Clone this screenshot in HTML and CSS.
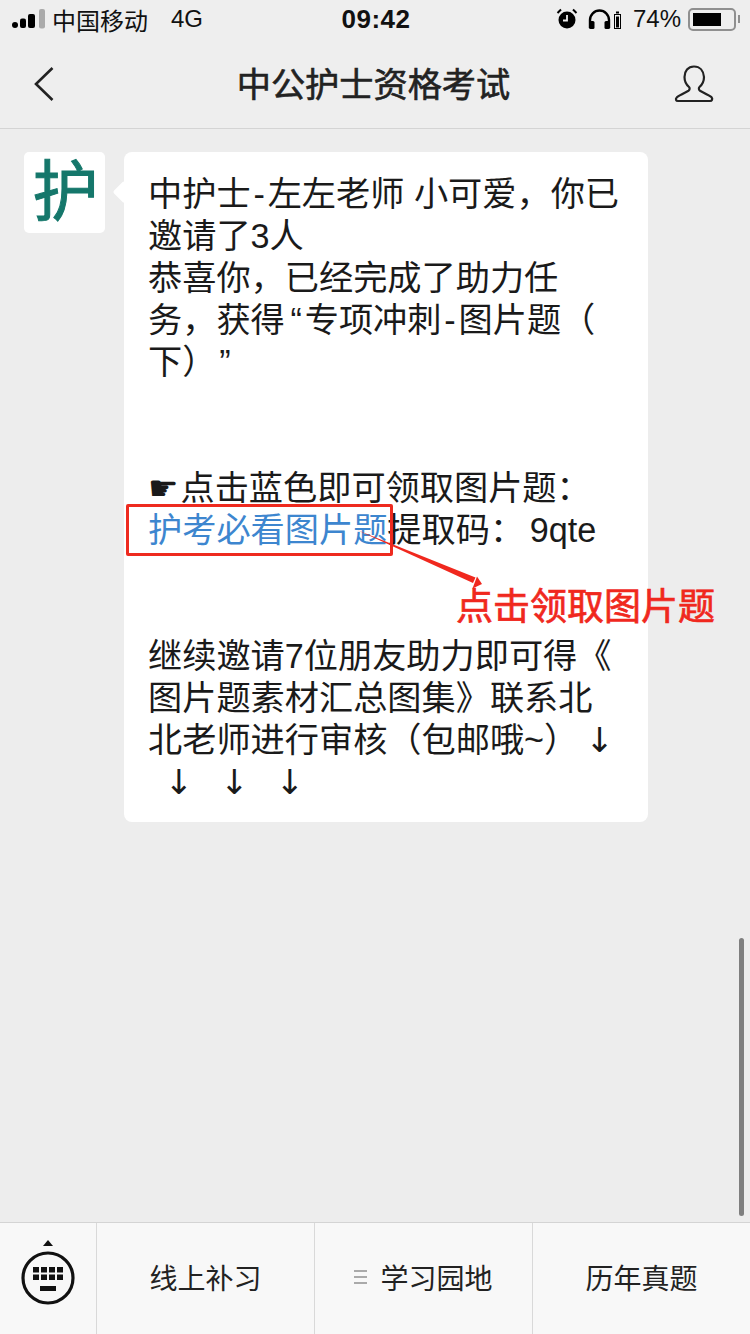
FILE: index.html
```html
<!DOCTYPE html>
<html lang="zh-CN">
<head>
    <meta charset="UTF-8">
    <meta name="viewport" content="width=device-width, initial-scale=1.0">
    <title>中公护士资格考试</title>
    <link rel="stylesheet" href="styles.css">
</head>
<body>
    <div class="screen">
        <header class="top">
            <div class="status-bar">
                <div class="status-left">
                    <svg class="signal" width="34" height="20" viewBox="0 0 34 20">
                        <circle cx="3" cy="16" r="3" fill="#000"/>
                        <rect x="8" y="9.500" width="6" height="9.500" rx="2" fill="#000"/>
                        <rect x="16" y="5" width="7" height="14" rx="2" fill="#000"/>
                        <rect x="27" y="0" width="6" height="19.500" rx="2" fill="#aaa"/>
                    </svg>
                    <span class="carrier">中国移动</span>
                    <span class="network">4G</span>
                </div>
                <div class="clock">09:42</div>
                <div class="status-right">
                    <svg width="22" height="22" viewBox="0 0 22 22">
                        <circle cx="11" cy="12" r="8.500" fill="#000"/>
                        <path d="M11 7v5.500H7" fill="none" stroke="#eee" stroke-width="1.800"/>
                        <path d="M1.500 5 5 1.500M20.500 5 17 1.500" stroke="#000" stroke-width="2"/>
                    </svg>
                    <svg class="phones" width="34" height="22" viewBox="0 0 34 22">
                        <path d="M2 20v-8a9.500 9.500 0 0 1 19 0v8" fill="none" stroke="#000" stroke-width="2.400"/>
                        <rect x="1" y="13" width="5.500" height="8" rx="1.500" fill="#000"/>
                        <rect x="16.500" y="13" width="5.500" height="8" rx="1.500" fill="#000"/>
                        <rect x="26.500" y="6.500" width="6" height="14" fill="none" stroke="#000" stroke-width="1"/>
                        <rect x="28" y="8.500" width="3" height="11" fill="#000"/>
                        <rect x="28" y="3.500" width="3" height="2" fill="#000"/>
                    </svg>
                    <span class="battery-text">74%</span>
                    <div class="battery"><div class="battery-fill"></div></div>
                    <div class="battery-tip"></div>
                </div>
            </div>
            <nav class="nav-bar">
                <svg width="22" height="36" viewBox="0 0 22 36">
                    <path d="M19.500 2 3 18l16.500 16" fill="none" stroke="#222" stroke-width="2.600"/>
                </svg>
                <h1 class="nav-title">中公护士资格考试</h1>
                <svg class="nav-user" width="40" height="38" viewBox="0 0 40 38">
                    <path d="M20 1.500c-6 0-9.500 4.500-9.500 10.500 0 4.500 2.200 8 4.500 10 1 1 .8 3-.5 3.800-3 1.700-9 4.400-11.500 6.400C1 34 2 36 4 36h32c2 0 3-2 1.500-3.800-2.500-2-8.500-4.700-11.500-6.400-1.300-.8-1.500-2.800-.5-3.800 2.300-2 4.500-5.500 4.500-10C29.500 6 26 1.500 20 1.500z" fill="none" stroke="#222" stroke-width="2.200"/>
                </svg>
            </nav>
        </header>

        <main class="chat">
            <div class="avatar">护</div>
            <div class="bubble">
                <p class="message">中护士&#8202;-&#8202;左左老师 小可爱，你已邀请了3人<br>恭喜你，已经完成了助力任务，获得&#8202;&#8202;“&#8202;专项冲刺&#8202;-&#8202;图片题（<br>下）&#8202;”<br><br><br><span class="hand">☛</span>点击蓝色即可领取图片题：<br><a class="link">护考必看图片题</a>提取码：&#8202;&#8202;9qte<br><br><br>继续邀请7位朋友助力即可得《<br>图片题素材汇总图集》联系北北老师进行审核（包邮哦~）<span class="arrows first">↓</span><br><span class="arrows last">&nbsp;↓&nbsp;&nbsp;↓&nbsp;&nbsp;↓</span></p>
            </div>
        </main>

        <footer class="menu">
            <div class="menu-keyboard">
                <svg width="56" height="68" viewBox="0 0 56 68">
                    <path d="M23 8 28 2l5 6z" fill="#111"/>
                    <circle cx="28" cy="40" r="25" fill="none" stroke="#111" stroke-width="3.200"/>
                    <path d="M13 29h6v5.500h-6zM21 29h6v5.500h-6zM29 29h6v5.500h-6zM37 29h6v5.500h-6zM13 36.500h6V42h-6zM21 36.500h6V42h-6zM29 36.500h6V42h-6zM37 36.500h6V42h-6zM20 48h16v5H20z" fill="#111"/>
                </svg>
            </div>
            <div class="menu-item">线上补习</div>
            <div class="menu-item"><span class="menu-lines"></span>学习园地</div>
            <div class="menu-item">历年真题</div>
        </footer>

        <!-- red annotation drawn on top of the screenshot -->
        <div class="mark-box"></div>
        <svg class="mark-arrow" width="130" height="62" viewBox="0 0 130 62">
            <path d="M0 0 118.500 47.500 116 53z" fill="#f0281e"/>
            <path d="M125 54 120 46.500 115.500 58.500z" fill="#f0281e"/>
        </svg>
        <div class="mark-text">点击领取图片题</div>
        <div class="scrollbar"></div>
    </div>
</body>
</html>
```

FILE: styles.css
```css
* {
    box-sizing: border-box;
}

body {
    margin: 0;
    font-family: "Liberation Sans", "Noto Sans CJK SC", sans-serif;
    color: #1c1c1c;
    background: #ededed;
    text-spacing-trim: space-all;
}

.screen {
    position: relative;
    width: 750px;
    height: 1334px;
    overflow: hidden;
    display: flex;
    flex-direction: column;
}

.top {
    height: 129px;
    background: #eeeeee;
    border-bottom: 1px solid #d4d4d4;
}

.status-bar {
    height: 40px;
    display: grid;
    grid-template-columns: 1fr auto 1fr;
    align-items: center;
    padding: 0 10px 2px 12px;
    font-size: 24px;
    color: #111;
}

.status-left {
    display: flex;
    align-items: center;
}

.carrier {
    margin-left: 6px;
}

.network {
    margin-left: 23px;
}

.clock {
    font-size: 26px;
    font-weight: bold;
    letter-spacing: 0.5px;
}

.status-right {
    display: flex;
    align-items: center;
    justify-content: flex-end;
}

.phones {
    margin-left: 10px;
}

.battery-text {
    margin-left: 11px;
}

.battery {
    width: 48px;
    height: 23px;
    margin-left: 7px;
    padding: 3px;
    border: 2px solid #8f8f8f;
    border-radius: 5px;
}

.battery-fill {
    width: 74%;
    height: 100%;
    background: #000;
}

.battery-tip {
    width: 2px;
    height: 8px;
    margin-left: 2px;
    background: #8f8f8f;
}

.nav-bar {
    height: 88px;
    display: grid;
    grid-template-columns: 1fr auto 1fr;
    align-items: center;
    padding: 0 36px 1px 33px;
}

.nav-title {
    margin: 0 0 3px;
    font-size: 34.200px;
    font-weight: 400;
    -webkit-text-stroke: 0.6px #222;
    color: #222;
}

.nav-user {
    justify-self: end;
}

.chat {
    flex: 1;
    display: flex;
    align-items: flex-start;
    gap: 19px;
    padding: 23px 0 0 24px;
}

.avatar {
    width: 81px;
    height: 81px;
    padding-left: 2px;
    background: #fff;
    border-radius: 5px;
    color: #15776b;
    font-size: 66px;
    -webkit-text-stroke: 1px #15776b;
    line-height: 81px;
    text-align: center;
}

.bubble {
    position: relative;
    width: 524px;
    padding: 21px 24px 19px;
    background: #fff;
    border-radius: 8px;
}

.bubble::before {
    content: "";
    position: absolute;
    left: -8px;
    top: 32px;
    width: 16px;
    height: 16px;
    background: #fff;
    transform: rotate(45deg);
    border-radius: 2px;
}

.message {
    position: relative;
    margin: 0;
    font-size: 34.200px;
    line-height: 42px;
    color: #1a1a1a;
}

.hand {
    margin-right: 2px;
    font-family: "DejaVu Sans", sans-serif;
    font-size: 34px;
    line-height: 1;
}

.link {
    color: #3d86cf;
}

.arrows {
    font-family: "DejaVu Sans", sans-serif;
    line-height: 1;
}

.arrows.first {
    margin-left: 7px;
}

.arrows.last {
    padding-left: 4px;
    letter-spacing: 1.700px;
}

.menu {
    height: 112px;
    display: flex;
    background: #f8f8f8;
    border-top: 1px solid #d4d4d4;
}

.menu-keyboard {
    width: 97px;
    display: flex;
    align-items: center;
    justify-content: center;
    padding: 0 1px 13px 0;
    border-right: 1px solid #d9d9d9;
}

.menu-item {
    flex: 1;
    display: flex;
    align-items: center;
    justify-content: center;
    padding-bottom: 4px;
    font-size: 28px;
    color: #222;
    border-right: 1px solid #d9d9d9;
}

.menu-item:last-child {
    border-right: none;
}

.menu-lines {
    width: 13px;
    height: 14px;
    margin-right: 13px;
    border-top: 2px solid #aaa;
    border-bottom: 2px solid #aaa;
    background: linear-gradient(#aaa, #aaa) center / 100% 2px no-repeat;
}

.mark-box {
    position: absolute;
    left: 126px;
    top: 504px;
    width: 267px;
    height: 52px;
    border: 3px solid #ee2a1f;
    border-radius: 2px;
}

.mark-arrow {
    position: absolute;
    left: 357px;
    top: 530px;
}

.mark-text {
    position: absolute;
    left: 456px;
    top: 586px;
    font-size: 37px;
    -webkit-text-stroke: 0.7px #f0281e;
    line-height: 44px;
    color: #f0281e;
    white-space: nowrap;
}

.scrollbar {
    position: absolute;
    left: 739px;
    top: 938px;
    width: 5px;
    height: 278px;
    border-radius: 3px;
    background: #7f7f7f;
}
```
